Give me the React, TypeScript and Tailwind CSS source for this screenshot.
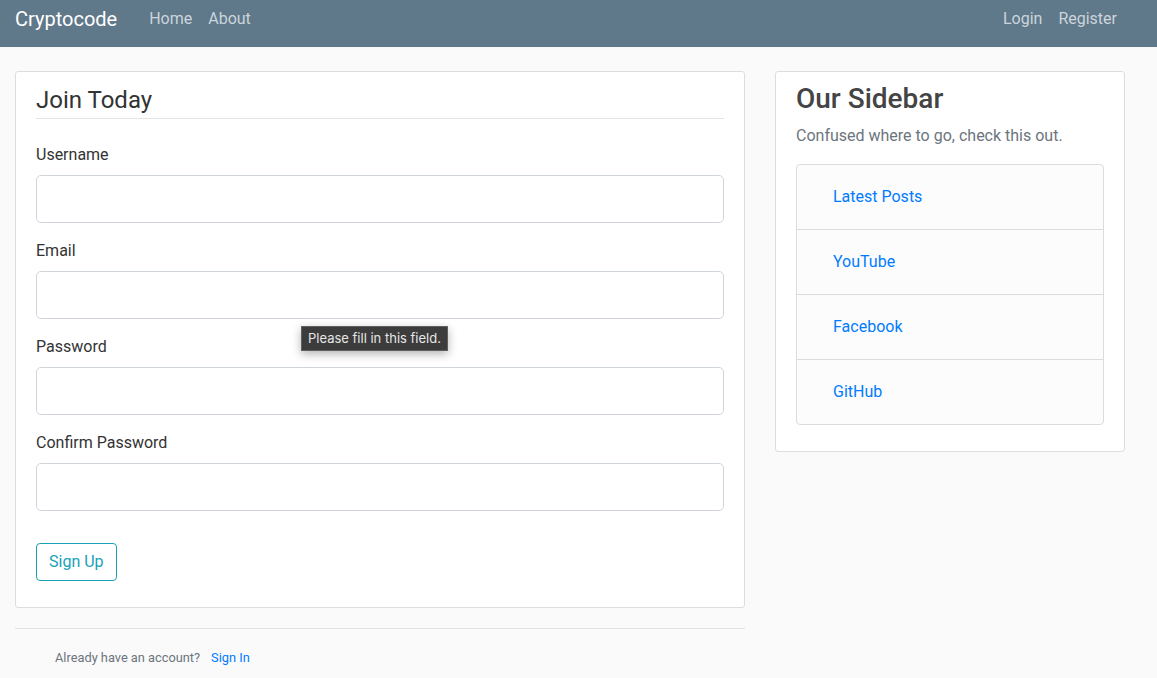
import React from "react"

const fields = ["Username", "Email", "Password", "Confirm Password"]
const links = ["Latest Posts", "YouTube", "Facebook", "GitHub"]

export default function App() {
  return (
    <div className="relative min-h-[678px] bg-[#fafafa] font-['Roboto',sans-serif] text-[#333333]">
      <header className="flex h-[47px] items-start bg-[#5f788a] pl-[15px] pr-[40px] pt-[6px]">
        <a className="text-[20px] leading-[26px] text-white" href="#">
          Cryptocode
        </a>
        <nav className="ml-[32px] flex gap-[16px] pt-[1px] text-[16px] leading-[24px] text-[#cbd5db]">
          <a href="#">Home</a>
          <a href="#">About</a>
        </nav>
        <nav className="ml-auto flex gap-[16px] pt-[1px] text-[16px] leading-[24px] text-[#cbd5db]">
          <a href="#">Login</a>
          <a href="#">Register</a>
        </nav>
      </header>

      <main className="flex items-start gap-[30px] px-[15px] pt-[24px]">
        <div className="w-[730px]">
          <section className="rounded-[3px] border border-[#dddddd] bg-white px-[20px] pb-[10px] pt-[10px]">
            <form>
              <h2 className="mb-[24px] border-b border-[#e5e5e5] text-[24px] leading-[36px] text-[#333333]">
                Join Today
              </h2>
              {fields.map((f) => (
                <div key={f} className="mb-[16px]">
                  <label className="mb-[8px] block text-[16px] leading-[24px]">{f}</label>
                  <input
                    type={f.includes("Password") ? "password" : "text"}
                    className="block h-[48px] w-full rounded-[5px] border border-[#ced4da] bg-white px-4 text-[20px] outline-none"
                  />
                </div>
              ))}
              <div className="mb-[16px] pt-[16px]">
                <button
                  type="button"
                  className="h-[38px] rounded-[4px] border border-[#17a2b8] px-[12px] text-[16px] leading-[24px] text-[#17a2b8]"
                >
                  Sign Up
                </button>
              </div>
            </form>
          </section>
          <div className="mt-[20px] border-t border-[#dee2e6] pl-[40px] pt-[19px] text-[12.8px] leading-[19px] text-[#6c757d]">
            Already have an account?
            <a className="ml-[11px] text-[#007bff]" href="#">
              Sign In
            </a>
          </div>
        </div>

        <aside className="w-[350px] rounded-[3px] border border-[#dddddd] bg-white px-[20px] pb-[10px] pt-[10px]">
          <h3 className="mb-[8px] text-[28px] font-medium leading-[34px] text-[#444444]">Our Sidebar</h3>
          <p className="mb-[16px] text-[16px] leading-[24px] text-[#6c757d]">
            Confused where to go, check this out.
          </p>
          <ul className="mb-[16px] overflow-hidden rounded-[4px] border border-[#dcdcdc] bg-[#fcfcfc]">
            {links.map((l, i) => (
              <li
                key={l}
                className={`flex items-center pl-[36px] text-[16px] text-[#007bff] ${i > 0 ? "h-[65px] border-t border-[#dcdcdc]" : "h-[64px]"}`}
              >
                <a href="#">{l}</a>
              </li>
            ))}
          </ul>
        </aside>
      </main>

      <div className="absolute left-[301px] top-[326px] flex h-[25px] items-center border border-[#5f5f5f] bg-[#3c3c3c] px-[6px] font-['Inter',sans-serif] text-[13px] text-[#e6e6e6] shadow-[0_3px_10px_rgba(0,0,0,0.3)]">
        Please fill in this field.
      </div>
    </div>
  )
}
